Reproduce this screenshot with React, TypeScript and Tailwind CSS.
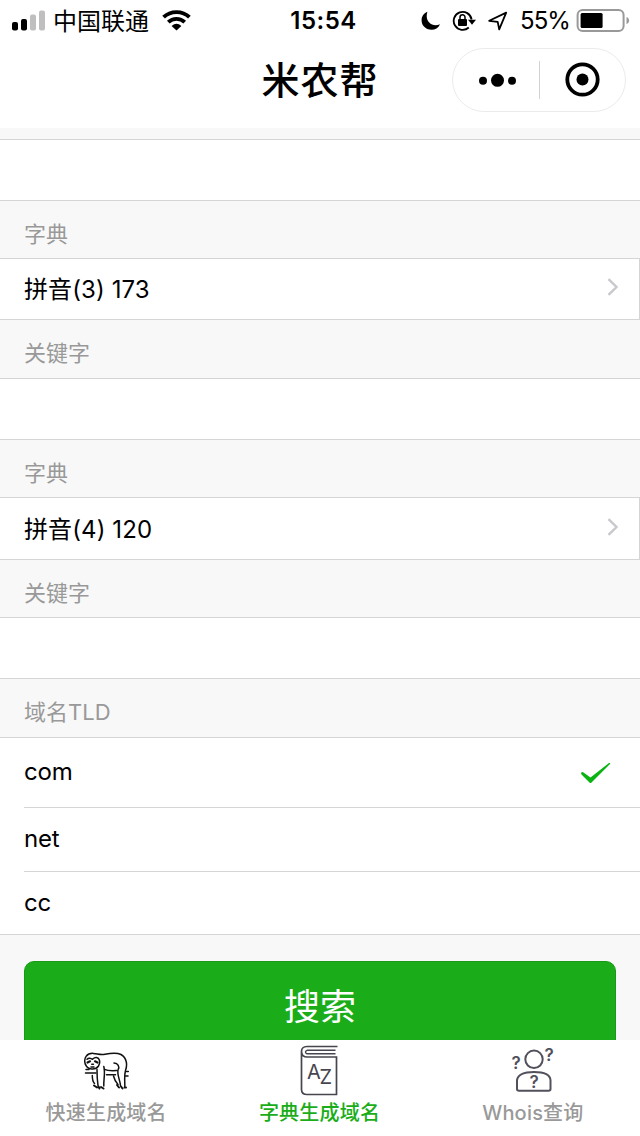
import type { ReactNode } from "react";
import clsx from "clsx";

const tlds = [
  { name: "com", checked: true, height: "h-[69px] pb-[2px]" },
  { name: "net", checked: false, height: "h-[64px] pb-[2px]" },
  { name: "cc", checked: false, height: "h-[63px]" },
];

function StatusBar() {
  return (
    <div className="h-[41px] flex items-center justify-between text-black">
      <div className="flex-1 flex items-center">
        <svg className="ml-3 w-[34px] h-[22px]" viewBox="0 0 34 22">
          <rect x="0" y="12" width="6" height="8.5" rx="2" />
          <rect x="9" y="9" width="6" height="11.5" rx="2" />
          <rect x="18" y="4.5" width="6" height="16" rx="2" fill="#bfbfbf" />
          <rect x="27" y="0.5" width="6" height="20" rx="2" fill="#bfbfbf" />
        </svg>
        <span className="ml-[7px] pt-[2px] text-2xl leading-none">中国联通</span>
        <svg className="ml-[13px] w-[29px] h-[22px]" viewBox="0 0 29 22" fill="none" stroke="#000" strokeWidth="3.8">
          <path d="M1.6 7.2C8.5 0.3 20.5 0.3 27.4 7.2" />
          <path d="M6.3 12.2C10.8 7.8 18.2 7.8 22.7 12.2" />
          <path d="M14.5 20.5L9.6 15.9Q14.5 11.7 19.4 15.9Z" fill="#000" stroke="none" />
        </svg>
      </div>
      <span className="pl-[7px] text-2xl leading-none font-semibold tracking-[0.5px]">15:54</span>
      <div className="flex-1 flex items-center justify-end">
        <svg className="w-[20px] h-[20px]" viewBox="0 0 20 20">
          <path d="M6.4 0.8C-0.2 3.3-0.8 11 2.7 15.2C7.2 20.5 16.2 20 19 13.3C10.5 16.5 3.4 10 6.4 0.8Z" />
        </svg>
        <svg className="ml-[11px] w-[24px] h-[22px]" viewBox="0 0 24 22" fill="none" stroke="#000" strokeWidth="1.8">
          <path d="M16.8 17.5A9 9 0 1 1 19.6 9.5" />
          <path d="M16 9.7h8l-4 5z" fill="#000" stroke="none" />
          <rect x="6" y="9.1" width="9" height="6.8" rx="1" fill="#000" stroke="none" />
          <path d="M8 10V7.300a2.500 2.500 0 0 1 5 0v2.700" strokeWidth="1.5" />
        </svg>
        <svg className="ml-[12px] w-[20px] h-[20px]" viewBox="0 0 20 20" fill="none" stroke="#000" strokeWidth="1.8" strokeLinejoin="round">
          <path d="M1.2 9.8L18.2 1.6L11.2 18.4L9.7 10.8Z" />
        </svg>
        <span className="ml-3 pt-px text-2xl leading-none tracking-[-0.9px]">55%</span>
        <svg className="ml-[6px] mr-[10px] w-[54px] h-[24px]" viewBox="0 0 54 24">
          <rect x="1.6" y="1" width="46" height="21" rx="5" fill="none" stroke="#999" strokeWidth="2" />
          <rect x="4.6" y="4" width="22" height="15" rx="1.5" />
          <path d="M50.5 8c3.5 1 3.5 6 0 7z" fill="#999" />
        </svg>
      </div>
    </div>
  );
}

function NavBar() {
  return (
    <div className="h-[87px] grid grid-cols-[1fr_auto_1fr] items-start">
      <div />
      <h1 className="pt-[11px] text-[38px] leading-[56px] tracking-[1px] font-medium">米农帮</h1>
      <div className="mt-[7px] mr-[14px] w-[174px] h-[64px] justify-self-end rounded-full border border-[#ebebeb] flex items-center">
        <svg className="w-[86px] h-[40px]" viewBox="0 0 86 40">
          <circle cx="30" cy="20.8" r="4" />
          <circle cx="44.5" cy="20.3" r="6.5" />
          <circle cx="59" cy="20.8" r="4" />
        </svg>
        <div className="w-px h-[38px] bg-[#d2d2d2]" />
        <svg className="w-[85px] h-[40px]" viewBox="0 0 85 40">
          <circle cx="42.5" cy="19.5" r="15.2" fill="none" stroke="#000" strokeWidth="3.8" />
          <circle cx="42.5" cy="19.5" r="6" />
        </svg>
      </div>
    </div>
  );
}

function Label({ children, className = "h-[58px]" }: { children: ReactNode; className?: string }) {
  return (
    <div className={clsx("px-6 pt-[17px] text-[22px] leading-8 text-[#999]", className)}>
      {children}
    </div>
  );
}

function InputCell() {
  return <div className="h-[62px] bg-white border-y border-[#d5d5d5]" />;
}

function PickerCell({ value, className = "h-[62px]" }: { value: string; className?: string }) {
  return (
    <div className={clsx("bg-white border-y border-r border-[#d5d5d5] pl-6 pr-5 flex items-center justify-between", className)}>
      <span className="pt-[2px] text-2xl tracking-[0.1px]">{value}</span>
      <svg className="mb-[4px] w-[12px] h-[18px]" viewBox="0 0 12 18" fill="none" stroke="#c8c8cd" strokeWidth="2.4">
        <path d="M1.5 1.2L9.5 9L1.5 16.8" />
      </svg>
    </div>
  );
}

function SlothIcon() {
  return (
    <svg className="w-[48px] h-[42px]" viewBox="0 0 48 42" fill="none" stroke="#111" strokeWidth="1.5" strokeLinecap="round" strokeLinejoin="round">
      {/* body */}
      <path d="M2.5 14.5C0 8 4 3 10.3 3.4C15 3.8 17 5.3 22 4.3C28 3 33 2 38 4.5C44 8 44.5 15 42.5 20.5C41 26 42 31 41.8 36.5" />
      {/* face */}
      <path d="M2.5 14.5C4.5 19.8 12.5 20.5 15.5 16C18 12 16.5 8 13.5 7.6C11.5 7.3 10.3 8.5 9.3 9.3C8 8 5.5 7.6 4 9.3" />
      <path d="M4.5 12.5L7 11.3M12 11.3L14.5 12.5" strokeWidth="2.2" />
      <path d="M8.8 14.2h1.6M8 17h3" />
      {/* limbs */}
      <path d="M14 19.5C14 25 14.2 30 15 35.5M20.8 16.5C22.5 23 20.5 29 20.8 36" />
      <path d="M21.5 19.3C25 21 29.5 20.8 33.5 20.5M31 13C35 13.3 37 16.5 35 20C34 25 37 30 37.5 35.5" />
      <path d="M9.3 25.5C9.3 29 9.5 31.5 11.5 33.5M30.5 26C31.5 30 32.5 32 35 34.5" />
      {/* branch */}
      <path d="M3 19.5h3M2.5 23h10.5M23.5 24.8h9M43.5 21.5h1.8M42.5 26h2.5" />
      <path d="M11 35.5L14 37.5M15.5 36.5L16.5 38.5M18 37L20.5 38.5M34 35L36 37.5M38 36.5L39.5 38.5M41.5 37.5h1.5" strokeWidth="2" />
    </svg>
  );
}

function DictionaryIcon() {
  return (
    <svg className="w-[40px] h-[52px]" viewBox="0.5 0 40 52" fill="none" stroke="#46464e" strokeWidth="1.7">
      <path d="M38 1.5H7.5C3.5 1.5 2 4 2 6.5V44.5C2 48 4.5 49.5 7.5 49.5H37V12H7.5C4 12 2.5 10 2.2 7.5" />
      <path d="M36 5.3H7.5C5.5 6 5.5 8.2 7.5 8.8H36" strokeWidth="1.4" />
      <g fill="#46464e" stroke="none" fontFamily="Inter, sans-serif" fontSize="20">
        <text x="7.5" y="33.5">A</text>
        <text x="20" y="38.5">Z</text>
      </g>
    </svg>
  );
}

function WhoisIcon() {
  return (
    <svg className="w-[48px] h-[58px]" viewBox="-2 -5 48 58" fill="none" stroke="#51515d" strokeWidth="2">
      <circle cx="23" cy="12.3" r="8.7" />
      <path d="M6 42V33C7 27.5 13 25 23 25S39 27.5 39.5 33V42Q39.5 43.8 37.5 43.8H8Q6 43.8 6 42Z" />
      <g fill="#51515d" stroke="none" fontFamily="Inter, sans-serif" fontWeight="600" fontSize="17">
        <text x="0.5" y="21.8">?</text>
        <text x="33.5" y="13.5">?</text>
        <text x="18.5" y="40.5">?</text>
      </g>
    </svg>
  );
}

const tabs = [
  { label: "快速生成域名", icon: <SlothIcon />, active: false },
  { label: "字典生成域名", icon: <DictionaryIcon />, active: true },
  { label: "Whois查询", icon: <WhoisIcon />, active: false },
];

function TabBar() {
  return (
    <div className="h-24 shrink-0 bg-white grid grid-cols-3">
      {tabs.map((tab) => (
        <div key={tab.label} className="flex flex-col items-center">
          <div className="h-[61px] pt-px flex items-center">{tab.icon}</div>
          <span
            className={clsx(
              "mr-px text-[20px] leading-6 tracking-[0.2px] font-medium",
              tab.active ? "text-[#1aad19]" : "text-[#999]"
            )}
          >
            {tab.label}
          </span>
        </div>
      ))}
    </div>
  );
}

export default function App() {
  return (
    <div className="w-[640px] h-[1136px] overflow-hidden flex flex-col bg-white text-black font-['Inter','Noto_Sans_CJK_SC',sans-serif]">
      <StatusBar />
      <NavBar />

      <div className="flex-1 min-h-0 overflow-hidden bg-[#f8f8f8] pt-[11px]">
        <InputCell />
        <Label className="h-[57px]">字典</Label>
        <PickerCell value="拼音(3) 173" />
        <Label>关键字</Label>
        <InputCell />
        <Label className="h-[57px]">字典</Label>
        <PickerCell value="拼音(4) 120" className="h-[63px]" />
        <Label className="h-[57px]">关键字</Label>
        <InputCell />
        <Label>域名TLD</Label>

        <div className="bg-white border-y border-[#d5d5d5] pl-6">
          {tlds.map((tld, index) => (
            <div
              key={tld.name}
              className={clsx(
                "flex items-center justify-between pr-[29px] text-2xl tracking-[-0.2px]",
                tld.height,
                index > 0 && "border-t border-[#d5d5d5]"
              )}
            >
              <span>{tld.name}</span>
              {tld.checked && (
                <svg className="mt-[3px] w-[31px] h-[22px]" viewBox="0 0 31 22" fill="#09b312">
                  <path d="M1 11Q2 9.5 3.5 10.5L10.5 15.500L29 1Q31 0.5 30 2L11.5 20.5Q10.5 21.5 9.5 20.5L1.5 12.5Z" />
                </svg>
              )}
            </div>
          ))}
        </div>

        <button className="mt-[26px] mx-6 w-[592px] h-[92px] rounded-[10px] border border-[#179b16] bg-[#1aad19] text-white text-4xl">
          搜索
        </button>
      </div>

      <TabBar />
    </div>
  );
}
